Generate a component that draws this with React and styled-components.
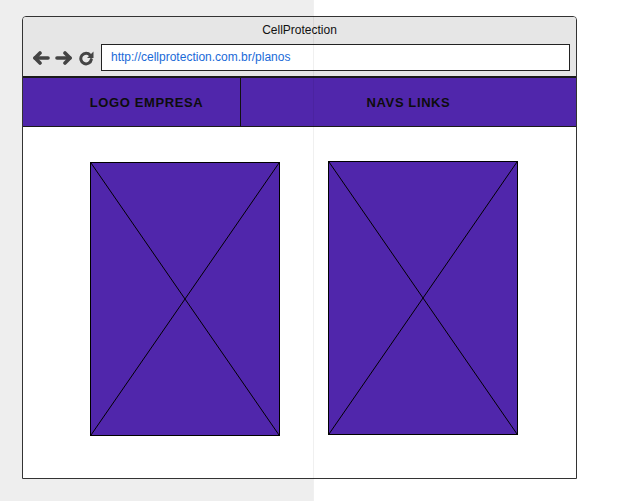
import React from 'react';
import styled, { createGlobalStyle } from 'styled-components';

const GlobalStyle = createGlobalStyle`
  html, body {
    margin: 0;
    padding: 0;
  }
  body {
    width: 629px;
    height: 501px;
    overflow: hidden;
    font-family: "Liberation Sans", Arial, sans-serif;
    background: linear-gradient(to right, #eeeeee 0, #eeeeee 313px, #ffffff 313px);
  }
`;

const Page = styled.div`
  position: relative;
  width: 629px;
  height: 501px;
  padding: 16px 0 0 22px;
  box-sizing: border-box;
`;

// faint guide line that runs over everything
const Guide = styled.div`
  position: absolute;
  left: 313px;
  top: 0;
  width: 1px;
  height: 501px;
  background: rgba(0, 0, 0, 0.06);
  pointer-events: none;
`;

const Window = styled.div`
  width: 555px;
  height: 463px;
  box-sizing: border-box;
  border: 1px solid #333;
  border-radius: 4px 4px 0 0;
  background: #fff;
  display: flex;
  flex-direction: column;
  overflow: hidden;
`;

const Toolbar = styled.div`
  background: #e6e6e6;
  height: 59px;
  display: flex;
  flex-direction: column;
`;

const Title = styled.div`
  height: 27px;
  line-height: 27px;
  text-align: center;
  font-size: 12px;
  color: #111;
`;

const NavRow = styled.div`
  display: flex;
  align-items: center;
  padding: 0 6px 0 6px;
  height: 27px;
`;

const IconButton = styled.span`
  display: inline-flex;
  align-items: center;
  justify-content: center;
  width: ${(p) => p.w}px;
  height: 27px;

  svg {
    display: block;
  }
`;

const UrlBar = styled.div`
  flex: 1;
  height: 27px;
  box-sizing: border-box;
  border: 1px solid #222;
  background: #fff;
  margin-left: 5px;
  padding-left: 9px;
  font-size: 12px;
  line-height: 25px;
  color: #1a6ad8;
`;

const Header = styled.div`
  display: flex;
  height: 51px;
  box-sizing: border-box;
  border-top: 2px solid #1a1a1a;
  border-bottom: 1px solid #1a1a1a;
  background: #5026ab;
`;

const HeaderCell = styled.div`
  width: ${(p) => (p.w ? `${p.w}px` : 'auto')};
  flex: ${(p) => (p.w ? 'none' : 1)};
  box-sizing: border-box;
  border-right: ${(p) => (p.divider ? '1px solid #111' : 'none')};
  padding-left: ${(p) => p.pad || 0}px;
  padding-top: 1px;
  display: flex;
  align-items: center;
  justify-content: center;
  font-size: 13px;
  font-weight: bold;
  letter-spacing: 0.6px;
  color: #0d0d0d;
`;

const Content = styled.div`
  flex: 1;
  display: flex;
  align-items: flex-start;
  padding: 34px 0 0 67px;
  gap: 48px;
`;

const Placeholder = styled.div`
  width: 190px;
  height: 274px;
  box-sizing: border-box;
  border: 1px solid #000;
  background: #5026ab;
  margin-top: ${(p) => p.offset || 0}px;

  svg {
    display: block;
    width: 100%;
    height: 100%;
  }
`;

function ArrowIcon({ dir }) {
  const flip = dir === 'right' ? 'translate(18 0) scale(-1 1)' : undefined;
  return (
    <svg width="18" height="14" viewBox="0 0 18 14">
      <g transform={flip} fill="none" stroke="#444" strokeWidth="3.6" strokeLinecap="round" strokeLinejoin="round">
        <line x1="3" y1="7" x2="16" y2="7" />
        <polyline points="8,2 3,7 8,12" />
      </g>
    </svg>
  );
}

function RefreshIcon() {
  return (
    <svg width="16" height="16" viewBox="0 0 16 16">
      <path
        d="M12.2 5.2 A5.3 5.3 0 1 0 13.3 9.6"
        fill="none"
        stroke="#444"
        strokeWidth="3"
        strokeLinecap="round"
      />
      <polygon points="15.5,1.5 15.5,8 9,8" fill="#444" />
    </svg>
  );
}

function ImageBox({ offset }) {
  return (
    <Placeholder offset={offset}>
      <svg viewBox="0 0 188 272" preserveAspectRatio="none">
        <line x1="0" y1="0" x2="188" y2="272" stroke="#000" strokeWidth="1" />
        <line x1="188" y1="0" x2="0" y2="272" stroke="#000" strokeWidth="1" />
      </svg>
    </Placeholder>
  );
}

export default function App() {
  return (
    <>
      <GlobalStyle />
      <Page>
        <Window>
          <Toolbar>
            <Title>CellProtection</Title>
            <NavRow>
              <IconButton w={23}><ArrowIcon dir="left" /></IconButton>
              <IconButton w={23}><ArrowIcon dir="right" /></IconButton>
              <IconButton w={21}><RefreshIcon /></IconButton>
              <UrlBar>http://cellprotection.com.br/planos</UrlBar>
            </NavRow>
          </Toolbar>
          <Header>
            <HeaderCell w={218} pad={30} divider>LOGO EMPRESA</HeaderCell>
            <HeaderCell>NAVS LINKS</HeaderCell>
          </Header>
          <Content>
            <ImageBox offset={1} />
            <ImageBox />
          </Content>
        </Window>
        <Guide />
      </Page>
    </>
  );
}
